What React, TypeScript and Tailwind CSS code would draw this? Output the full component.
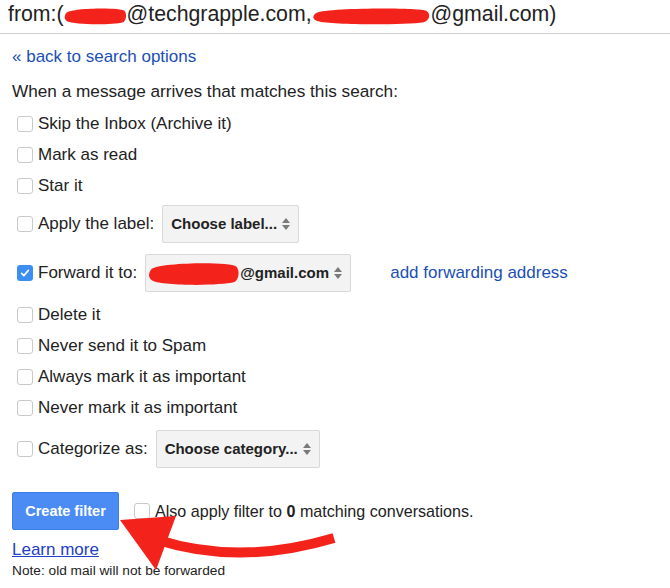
import { ReactNode } from 'react';

function Redact({ className }: { className: string }) {
  return (
    <svg
      viewBox="0 0 100 20"
      preserveAspectRatio="none"
      className={`inline-block align-middle ${className}`}
    >
      <path
        d="M4 7 C 12 2, 88 1, 96 5 C 100 8, 99 15, 94 17 C 78 20, 16 20, 5 16 C 0 14, 0 10, 4 7 Z"
        fill="#f3231c"
      />
    </svg>
  );
}

function Checkbox({ checked = false }: { checked?: boolean }) {
  if (checked) {
    return (
      <span className="ml-[5px] mr-[5px] flex h-4 w-4 shrink-0 items-center justify-center rounded-[3px] bg-[#3d8ef2]">
        <svg viewBox="0 0 16 16" className="h-3 w-3">
          <path
            d="M3.5 8.5 L6.5 11.5 L12.5 4.5"
            fill="none"
            stroke="white"
            strokeWidth="2.2"
            strokeLinecap="round"
            strokeLinejoin="round"
          />
        </svg>
      </span>
    );
  }
  return (
    <span className="ml-[5px] mr-[5px] h-4 w-4 shrink-0 rounded-[3px] border border-[#c9c9c9] bg-white" />
  );
}

function Arrows() {
  return (
    <svg viewBox="0 0 8 14" className="h-[14px] w-2 shrink-0">
      <path d="M0 6 L4 1 L8 6 Z" fill="#7a7a7a" />
      <path d="M0 8 L4 13 L8 8 Z" fill="#7a7a7a" />
    </svg>
  );
}

function Select({ width, children }: { width: string; children: ReactNode }) {
  return (
    <div
      className={`ml-2 flex h-[38px] items-center justify-between rounded-[2px] border border-[#d9d9d9] bg-[#f3f3f3] pl-[8px] pr-[8px] text-[15px] font-bold text-[#222] ${width}`}
    >
      {children}
    </div>
  );
}

function Row({ label, checked, height = 'h-[31px]', children }: {
  label: string;
  checked?: boolean;
  height?: string;
  children?: ReactNode;
}) {
  return (
    <div className={`flex items-center ${height}`}>
      <Checkbox checked={checked} />
      <span>{label}</span>
      {children}
    </div>
  );
}

export default function App() {
  return (
    <div
      className="relative h-[588px] w-[670px] overflow-hidden bg-white text-[#222]"
      style={{ fontFamily: '"Liberation Sans", Arial, sans-serif' }}
    >
      <div className="flex h-[34px] items-center border-b border-[#cfcfcf] px-2 pb-[3px] text-[21.3px] whitespace-nowrap">
        <span>from:(</span>
        <Redact className="h-[19px] w-[63px]" />
        <span>@techgrapple.com,</span>
        <Redact className="h-[19px] w-[119px]" />
        <span>@gmail.com)</span>
      </div>

      <div className="px-3 text-[17px] leading-[20px]">
        <div className="mt-[13px] text-[#1a4fb4]">« back to search options</div>
        <div className="mt-[14px] text-[17.2px]">When a message arrives that matches this search:</div>

        <div className="mt-[7px]">
          <Row label="Skip the Inbox (Archive it)" />
          <Row label="Mark as read" />
          <Row label="Star it" />
          <Row label="Apply the label:" height="h-[46px]">
            <Select width="w-[137px]">
              <span>Choose label...</span>
              <Arrows />
            </Select>
          </Row>
          <Row label="Forward it to:" checked height="h-[52px]">
            <Select width="w-[206px] !pl-[2px]">
              <span className="flex items-center">
                <Redact className="h-[26px] w-[92px]" />
                <span>@gmail.com</span>
              </span>
              <Arrows />
            </Select>
            <span className="ml-[39px] text-[#1a4fb4]">add forwarding address</span>
          </Row>
          <Row label="Delete it" />
          <Row label="Never send it to Spam" />
          <Row label="Always mark it as important" />
          <Row label="Never mark it as important" />
          <Row label="Categorize as:" height="h-[51px]">
            <Select width="w-[164px]">
              <span>Choose category...</span>
              <Arrows />
            </Select>
          </Row>
        </div>

        <div className="mt-[18px] flex items-center">
          <button className="h-[38px] w-[107px] rounded-[2px] border border-[#3b7eea] bg-[#4a8cf4] text-[14.5px] font-bold text-white">
            Create filter
          </button>
          <span className="ml-[15px] h-4 w-4 rounded-[3px] border border-[#c9c9c9] bg-white" />
          <span className="ml-[5px] text-[16.1px]">
            Also apply filter to <b>0</b> matching conversations.
          </span>
        </div>

        <div className="mt-[10px] text-[#2240c8] underline">Learn more</div>
        <div className="mt-[2px] text-[13.7px] leading-[17px]">
          Note: old mail will not be forwarded
        </div>
      </div>

      <svg
        className="pointer-events-none absolute inset-0"
        width="670"
        height="588"
        viewBox="0 0 670 588"
      >
        <path
          d="M158 540 Q 240 566 334 538"
          fill="none"
          stroke="#f3231c"
          strokeWidth="10"
        />
        <path d="M120 520 L176 516 L156 570 Z" fill="#f3231c" />
      </svg>
    </div>
  );
}
